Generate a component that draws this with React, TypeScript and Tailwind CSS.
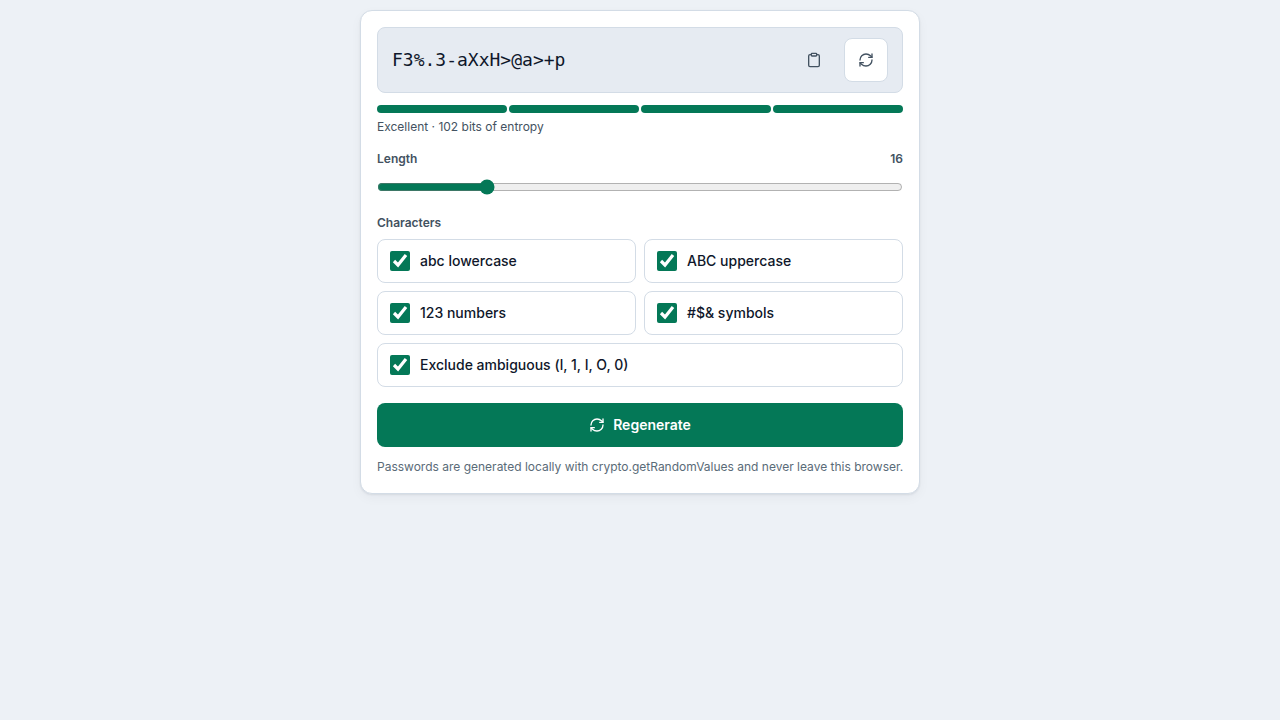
import { useState } from 'react';
import { Clipboard, RefreshCw } from 'lucide-react';

const MIN_LENGTH = 4;
const MAX_LENGTH = 64;

const SETS = [
  { id: 'lower', label: 'abc lowercase', chars: 'abcdefghijklmnopqrstuvwxyz' },
  { id: 'upper', label: 'ABC uppercase', chars: 'ABCDEFGHIJKLMNOPQRSTUVWXYZ' },
  { id: 'numbers', label: '123 numbers', chars: '0123456789' },
  { id: 'symbols', label: '#$& symbols', chars: '!@#$%^&*()-_=+[]{};:,.<>?' },
];

const AMBIGUOUS = 'l1IO0';

type Options = Record<string, boolean>;

function getPool(options: Options) {
  const all = SETS.filter((s) => options[s.id]).map((s) => s.chars).join('');
  return options.ambiguous ? [...all].filter((c) => !AMBIGUOUS.includes(c)).join('') : all;
}

function generate(length: number, options: Options) {
  const pool = getPool(options);
  if (!pool) return '';
  const values = crypto.getRandomValues(new Uint32Array(length));
  return Array.from(values, (v) => pool[v % pool.length]).join('');
}

function getStrength(bits: number) {
  if (bits >= 80) return { label: 'Excellent', score: 4 };
  if (bits >= 60) return { label: 'Strong', score: 3 };
  if (bits >= 40) return { label: 'Fair', score: 2 };
  return { label: 'Weak', score: 1 };
}

type CheckOptionProps = {
  label: string;
  checked: boolean;
  onChange: (checked: boolean) => void;
  className?: string;
};

function CheckOption({ label, checked, onChange, className = '' }: CheckOptionProps) {
  return (
    <label
      className={`flex h-11 cursor-pointer items-center gap-2.5 rounded-lg border border-[#d3dce6] bg-white px-3 text-sm font-medium text-[#0f172a] ${className}`}
    >
      <input
        type="checkbox"
        className="size-5 accent-[#047857]"
        checked={checked}
        onChange={(e) => onChange(e.target.checked)}
      />
      {label}
    </label>
  );
}

export default function App() {
  const [length, setLength] = useState(16);
  const [options, setOptions] = useState<Options>({
    lower: true,
    upper: true,
    numbers: true,
    symbols: true,
    ambiguous: true,
  });
  const [password, setPassword] = useState('F3%.3-aXxH>@a>+p');

  const poolSize = getPool(options).length;
  const bits = poolSize ? Math.round(length * Math.log2(poolSize)) : 0;
  const strength = getStrength(bits);

  const update = (nextLength: number, nextOptions: Options) => {
    setLength(nextLength);
    setOptions(nextOptions);
    setPassword(generate(nextLength, nextOptions));
  };

  const regenerate = () => setPassword(generate(length, options));

  return (
    <div className="min-h-screen bg-[#edf1f6] py-2.5 font-['Inter',sans-serif] text-[#0f172a] antialiased">
      <main className="mx-auto max-w-[560px] rounded-xl border border-[#d3dce6] bg-white p-4 shadow-[0_1px_2px_rgba(15,23,42,0.08),0_4px_12px_rgba(15,23,42,0.04)]">
        <div className="flex items-center gap-2 rounded-lg border border-[#d3dce6] bg-[#e6ebf2] px-3.5 py-2.5">
          <output className="min-w-0 flex-1 font-['DejaVu_Sans_Mono',monospace] text-lg break-all">
            {password}
          </output>
          <button
            type="button"
            aria-label="Copy password"
            onClick={() => navigator.clipboard.writeText(password)}
            className="flex size-11 items-center justify-center rounded-lg text-[#435261]"
          >
            <Clipboard size={16} />
          </button>
          <button
            type="button"
            aria-label="New password"
            onClick={regenerate}
            className="flex size-11 items-center justify-center rounded-lg border border-[#d3dce6] bg-white text-[#435261]"
          >
            <RefreshCw size={16} />
          </button>
        </div>

        {/* Strength meter */}
        <div className="mt-3 flex gap-0.5">
          {[1, 2, 3, 4].map((step) => (
            <span
              key={step}
              className={`h-2 flex-1 rounded-full ${step <= strength.score ? 'bg-[#047857]' : 'bg-[#e6ebf2]'}`}
            />
          ))}
        </div>
        <p className="mt-1 text-xs leading-5 text-[#435261]">
          {strength.label} · {bits} bits of entropy
        </p>

        <div className="mt-3 flex justify-between text-xs leading-5 font-semibold text-[#435261]">
          <label htmlFor="length">Length</label>
          <span>{length}</span>
        </div>
        <input
          id="length"
          type="range"
          min={MIN_LENGTH}
          max={MAX_LENGTH}
          value={length}
          onChange={(e) => update(Number(e.target.value), options)}
          className="block h-9 w-full accent-[#047857]"
        />

        <fieldset className="mt-2">
          <legend className="mb-1.5 text-xs leading-5 font-semibold text-[#435261]">Characters</legend>
          <div className="grid grid-cols-2 gap-2">
            {SETS.map((set) => (
              <CheckOption
                key={set.id}
                label={set.label}
                checked={options[set.id]}
                onChange={(checked) => update(length, { ...options, [set.id]: checked })}
              />
            ))}
            <CheckOption
              label="Exclude ambiguous (l, 1, I, O, 0)"
              checked={options.ambiguous}
              onChange={(checked) => update(length, { ...options, ambiguous: checked })}
              className="col-span-2"
            />
          </div>
        </fieldset>

        <button
          type="button"
          onClick={regenerate}
          className="mt-4 flex h-11 w-full items-center justify-center gap-2 rounded-lg bg-[#047857] text-sm font-semibold text-white"
        >
          <RefreshCw size={16} />
          Regenerate
        </button>
        <p className="mt-2.5 text-xs leading-5 text-[#5a6b78] sm:whitespace-nowrap">
          Passwords are generated locally with crypto.getRandomValues and never leave this browser.
        </p>
      </main>
    </div>
  );
}
